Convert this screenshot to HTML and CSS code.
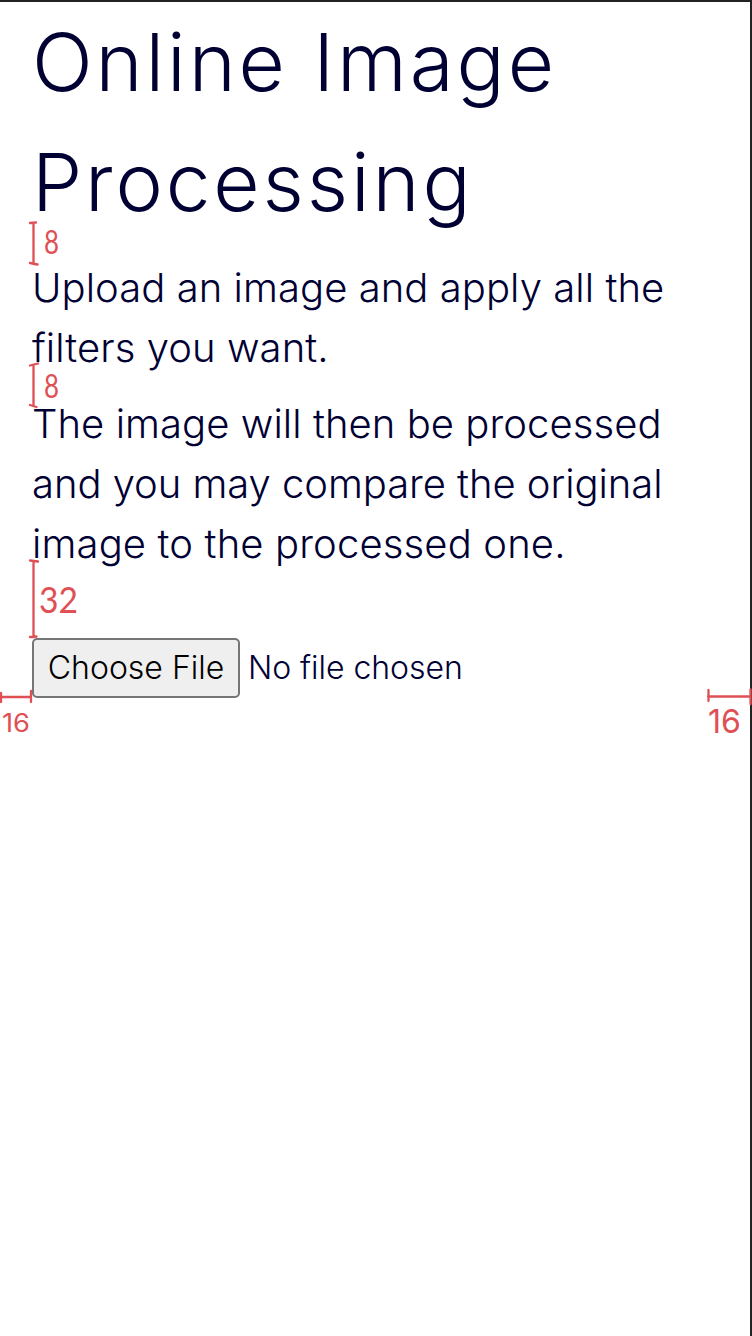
FILE: index.html
```html
<!DOCTYPE html>
<html lang="en">
<head>
<meta charset="utf-8">
<title>Online Image Processing</title>
<link rel="stylesheet" href="styles.css">
</head>
<body>
<main class="page">
  <h1 class="title">Online Image Processing</h1>
  <p class="text">Upload an image and apply all the filters you want.</p>
  <p class="text">The image will then be processed <span class="snug">and you may compare the original</span> <span class="loose">image to the processed one.</span></p>
  <div class="picker"><button class="choose" type="button">Choose File</button><span class="status">No file chosen</span></div>
</main>
<!-- spacing notes drawn over the page -->
<svg class="notes" viewBox="0 0 752 1336">
  <g class="ink">
    <path d="M33.500 223V264M30 223L36 222.500M30 263L37.500 264.500"/>
    <path d="M33.500 365V406M30 365.500L38 363.500M30 405L36.500 407"/>
    <path d="M33.500 561V637M30 560.500L38 561.500M30 637L36.500 636.500"/>
    <path d="M1 697H31M1 693V702M31 691V702"/>
    <path d="M708 696.500H750M708.500 690V701M750.500 689.500V704"/>
  </g>
  <g class="label">
    <text x="44" y="254" font-size="32" textLength="15" lengthAdjust="spacingAndGlyphs">8</text>
    <text x="44" y="398" font-size="32" textLength="15" lengthAdjust="spacingAndGlyphs">8</text>
    <text x="39" y="613" font-size="37" textLength="39" lengthAdjust="spacingAndGlyphs">32</text>
    <text class="plain" x="2" y="732" font-size="25" textLength="28" lengthAdjust="spacingAndGlyphs">16</text>
    <text class="plain" x="708" y="733" font-size="33" textLength="33" lengthAdjust="spacingAndGlyphs">16</text>
  </g>
</svg>
</body>
</html>
```
FILE: styles.css
```css
* { box-sizing: border-box; }
body { position: relative; margin: 0; background: #fff; font-family: Inter, sans-serif; font-weight: 300; color: #000033; }
.page { height: 1336px; padding: 0 32px; border-top: 2px solid #222; border-right: 2px solid #222; }
.title { margin: 0 0 16px; font-size: 80px; line-height: 120px; font-weight: 300; letter-spacing: 2.88px; }
.text { margin: 0 0 16px; font-size: 40px; line-height: 60px; letter-spacing: 0.06px; }
.snug { letter-spacing: -0.05px; }
.loose { letter-spacing: 0.14px; }
.picker { display: flex; align-items: center; gap: 8px; margin-top: 64px; font-size: 32px; }
.choose { width: 208px; height: 60px; padding: 0 0 1px; border: 2px solid #767676; border-radius: 5px; background: #efefef; font: inherit; color: #000; }
.status { padding-bottom: 1px; letter-spacing: -0.05px; }
.notes { position: absolute; inset: 0; width: 752px; height: 1336px; pointer-events: none; }
.ink { fill: none; stroke: #df5055; stroke-width: 2.3; stroke-linecap: round; }
.label { fill: #df5055; font-family: Lato, sans-serif; font-weight: 400; }
.plain { font-family: Inter, sans-serif; }
```
